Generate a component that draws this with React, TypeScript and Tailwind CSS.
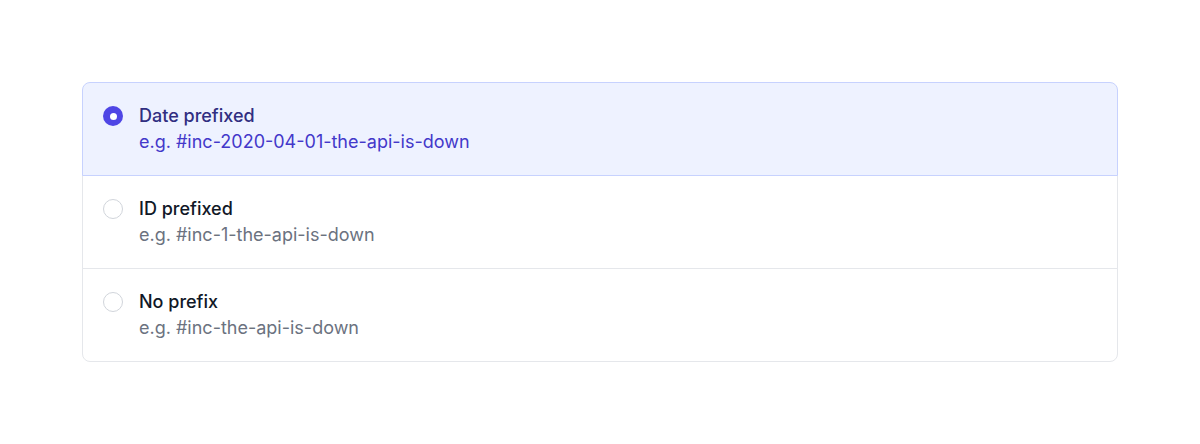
import React from "react";

const options = [
  { name: "Date prefixed", desc: "e.g. #inc-2020-04-01-the-api-is-down" },
  { name: "ID prefixed", desc: "e.g. #inc-1-the-api-is-down" },
  { name: "No prefix", desc: "e.g. #inc-the-api-is-down" },
];

export default function App() {
  const selected = 0;
  return (
    <div
      className="w-[1200px] h-[444px] bg-white pt-[82px] px-[82px]"
      style={{ fontFamily: "Inter, 'Noto Sans', sans-serif" }}
    >
      <div className="flex flex-col">
        {options.map((o, i) => {
          const sel = i === selected;
          return (
            <div
              key={o.name}
              className={[
                "relative flex items-start border p-5",
                i > 0 ? "-mt-px" : "",
                i === 0 ? "rounded-t-lg" : "",
                i === options.length - 1 ? "rounded-b-lg" : "",
                sel
                  ? "z-10 border-[#c7d2fe] bg-[#eef2ff]"
                  : "border-[#e5e7eb] bg-white",
              ].join(" ")}
            >
              <div className="h-[26px] flex items-center shrink-0">
                {sel ? (
                  <span className="w-5 h-5 rounded-full bg-[#4f46e5] flex items-center justify-center">
                    <span className="w-[7px] h-[7px] rounded-full bg-white" />
                  </span>
                ) : (
                  <span className="w-5 h-5 rounded-full border border-[#d1d5db] bg-white" />
                )}
              </div>
              <div className="ml-4 flex flex-col text-[18px] leading-[26px]">
                <span
                  className={
                    "font-medium " + (sel ? "text-[#312e81]" : "text-[#111827]")
                  }
                >
                  {o.name}
                </span>
                <span className={sel ? "text-[#4338ca]" : "text-[#6b7280]"}>
                  {o.desc}
                </span>
              </div>
            </div>
          );
        })}
      </div>
    </div>
  );
}
